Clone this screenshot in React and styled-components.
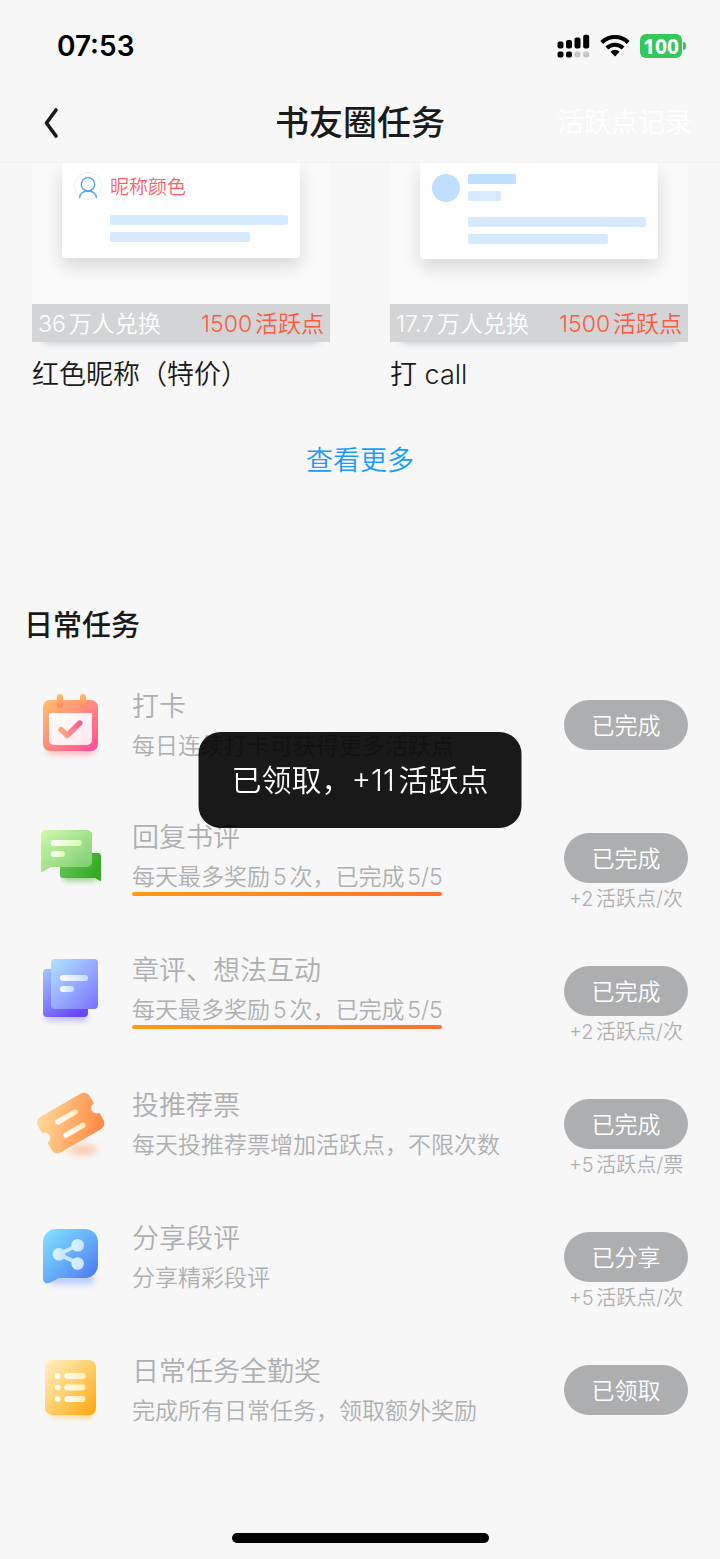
import React from "react";
import styled, { createGlobalStyle } from "styled-components";

const GlobalStyle = createGlobalStyle`
  * {
    box-sizing: border-box;
  }
  body {
    margin: 0;
    background: #f7f7f7;
    color: #1a1a1a;
    font-family: Inter, "Noto Sans CJK SC", sans-serif;
    text-autospace: normal;
  }
  button {
    font-family: inherit;
    border: 0;
    padding: 0;
    background: none;
  }
`;

const rewards = [
  {
    name: "红色昵称（特价）",
    count: "36万人兑换",
    price: "1500活跃点",
    nickname: "昵称颜色",
  },
  {
    name: "打 call",
    count: "17.7万人兑换",
    price: "1500活跃点",
  },
];

const CalendarIcon = () => (
  <svg width="80" height="80" viewBox="0 0 80 80" aria-hidden="true">
    <defs>
      <linearGradient id="calBody" x1="0" y1="0" x2="1" y2="1">
        <stop offset="0" stopColor="#ffc069" />
        <stop offset="0.5" stopColor="#ff8a80" />
        <stop offset="1" stopColor="#ff4a9c" />
      </linearGradient>
      <linearGradient id="calTab" x1="0" y1="0" x2="0" y2="1">
        <stop offset="0" stopColor="#ffbd66" />
        <stop offset="1" stopColor="#ff8868" />
      </linearGradient>
      <linearGradient id="calPaper" x1="0" y1="0" x2="1" y2="1">
        <stop offset="0" stopColor="#ffffff" />
        <stop offset="1" stopColor="#ffe6ec" />
      </linearGradient>
      <linearGradient id="calCheck" gradientUnits="userSpaceOnUse" x1="27" y1="50" x2="50" y2="40">
        <stop offset="0" stopColor="#ffb07a" />
        <stop offset="1" stopColor="#ff4f94" />
      </linearGradient>
      <filter id="calBlur" x="-20%" y="-80%" width="140%" height="260%">
        <feGaussianBlur stdDeviation="3" />
      </filter>
    </defs>
    <rect x="15" y="64" width="47" height="8" rx="4" fill="url(#calBody)" opacity="0.6" filter="url(#calBlur)" />
    <rect x="11" y="18" width="55" height="51" rx="7" fill="url(#calBody)" />
    <path d="M17 31h43v27a5 5 0 0 1-5 5H22a5 5 0 0 1-5-5z" fill="url(#calPaper)" />
    <rect x="25" y="12" width="6" height="14" rx="3" fill="url(#calTab)" />
    <rect x="48" y="12" width="6" height="14" rx="3" fill="url(#calTab)" />
    <path
      d="M29 47.5l6.3 6 12.4-12.5"
      fill="none"
      stroke="url(#calCheck)"
      strokeWidth="5.4"
      strokeLinecap="round"
      strokeLinejoin="round"
    />
  </svg>
);

const ReplyIcon = () => (
  <svg width="80" height="80" viewBox="0 0 80 80" aria-hidden="true">
    <defs>
      <linearGradient id="replyFront" x1="0" y1="0" x2="1" y2="1">
        <stop offset="0" stopColor="#d0f8ae" />
        <stop offset="1" stopColor="#78cb6a" />
      </linearGradient>
      <linearGradient id="replyBack" x1="0" y1="0" x2="1" y2="0.4">
        <stop offset="0" stopColor="#6cc95a" />
        <stop offset="1" stopColor="#35aa25" />
      </linearGradient>
      <linearGradient id="replyLine" x1="0" y1="0" x2="1" y2="0">
        <stop offset="0" stopColor="#ffffff" />
        <stop offset="1" stopColor="#d9f9ae" />
      </linearGradient>
      <filter id="replyBlur" x="-20%" y="-80%" width="140%" height="260%">
        <feGaussianBlur stdDeviation="2.5" />
      </filter>
    </defs>
    <rect x="31" y="60" width="34" height="6" rx="3" fill="#5cc048" opacity="0.65" filter="url(#replyBlur)" />
    <path d="M31 38h35a3 3 0 0 1 3 3v25.500l-6-3.500H31a3 3 0 0 1-3-3V41a3 3 0 0 1 3-3z" fill="url(#replyBack)" />
    <path d="M14 15h41a5 5 0 0 1 5 5v27a5 5 0 0 1-5 5H19l-10 5.500V20a5 5 0 0 1 5-5z" fill="url(#replyFront)" />
    <rect x="19" y="25" width="31" height="6" rx="3" fill="url(#replyLine)" />
    <rect x="19" y="36" width="14" height="6" rx="3" fill="url(#replyLine)" />
  </svg>
);

const ChapterIcon = () => (
  <svg width="80" height="80" viewBox="0 0 80 80" aria-hidden="true">
    <defs>
      <linearGradient id="chapFront" x1="0" y1="0" x2="1" y2="1">
        <stop offset="0" stopColor="#b0e2ff" />
        <stop offset="0.5" stopColor="#97adff" />
        <stop offset="1" stopColor="#7b6ffb" />
      </linearGradient>
      <linearGradient id="chapBack" x1="0" y1="0" x2="0.7" y2="1">
        <stop offset="0" stopColor="#a3c6ff" />
        <stop offset="1" stopColor="#6745fa" />
      </linearGradient>
      <linearGradient id="chapLine" x1="0" y1="0" x2="1" y2="0">
        <stop offset="0" stopColor="#ffffff" />
        <stop offset="1" stopColor="#c3dcff" />
      </linearGradient>
      <filter id="chapBlur" x="-20%" y="-80%" width="140%" height="260%">
        <feGaussianBlur stdDeviation="3" />
      </filter>
    </defs>
    <rect x="13" y="65" width="42" height="7" rx="3" fill="url(#chapBack)" opacity="0.55" filter="url(#chapBlur)" />
    <rect x="11" y="21" width="45" height="48" rx="4" fill="url(#chapBack)" />
    <rect x="19" y="11" width="47" height="50" rx="4" fill="url(#chapFront)" />
    <rect x="28" y="27" width="28" height="6" rx="3" fill="url(#chapLine)" />
    <rect x="28" y="38" width="14" height="6" rx="3" fill="url(#chapLine)" />
  </svg>
);

const TicketIcon = () => (
  <svg width="80" height="80" viewBox="0 0 80 80" aria-hidden="true">
    <defs>
      <linearGradient id="ticketBody" x1="0" y1="0.2" x2="1" y2="0.8">
        <stop offset="0" stopColor="#ffd793" />
        <stop offset="1" stopColor="#ff8a45" />
      </linearGradient>
      <linearGradient id="ticketLine" x1="0" y1="0" x2="1" y2="0">
        <stop offset="0" stopColor="#ffffff" />
        <stop offset="1" stopColor="#ffe9bf" />
      </linearGradient>
      <filter id="ticketBlur" x="-30%" y="-100%" width="160%" height="300%">
        <feGaussianBlur stdDeviation="3.5" />
      </filter>
    </defs>
    <ellipse cx="51" cy="69" rx="14" ry="5" fill="#ff9a5c" opacity="0.5" filter="url(#ticketBlur)" />
    <g transform="translate(38.7 42) rotate(-30)">
      <path
        d="M-23-20.500h46a7 7 0 0 1 7 7v8a5.500 5.500 0 0 0 0 11v8a7 7 0 0 1-7 7h-46a7 7 0 0 1-7-7v-8a5.500 5.500 0 0 0 0-11v-8a7 7 0 0 1 7-7z"
        fill="url(#ticketBody)"
      />
      <rect x="-13" y="-10" width="25" height="5.4" rx="2.7" fill="url(#ticketLine)" />
      <rect x="-13" y="5.5" width="25" height="5.4" rx="2.7" fill="url(#ticketLine)" />
    </g>
  </svg>
);

const ShareIcon = () => (
  <svg width="80" height="80" viewBox="0 0 80 80" aria-hidden="true">
    <defs>
      <linearGradient id="shareBody" x1="0" y1="0" x2="1" y2="1">
        <stop offset="0" stopColor="#83e3ff" />
        <stop offset="0.5" stopColor="#65aef9" />
        <stop offset="1" stopColor="#4a70ee" />
      </linearGradient>
      <linearGradient id="shareMark" x1="0" y1="0" x2="1" y2="0">
        <stop offset="0" stopColor="#d9f4ff" />
        <stop offset="1" stopColor="#c9e3ff" />
      </linearGradient>
      <filter id="shareBlur" x="-20%" y="-80%" width="140%" height="260%">
        <feGaussianBlur stdDeviation="3" />
      </filter>
    </defs>
    <rect x="18" y="61" width="44" height="9" rx="4" fill="#7ea6ff" opacity="0.55" filter="url(#shareBlur)" />
    <path
      d="M24 15h29a13 13 0 0 1 13 13v23a13 13 0 0 1-13 13H27l-8 4.200C14 71 11 68 11 65V28a13 13 0 0 1 13-13z"
      fill="url(#shareBody)"
    />
    <path d="M45.700 31.300L27 40.300l18.700 9" fill="none" stroke="#c9e6ff" strokeWidth="3.8" />
    <circle cx="27" cy="40.3" r="6.3" fill="url(#shareMark)" />
    <circle cx="45.7" cy="31.3" r="6.3" fill="url(#shareMark)" />
    <circle cx="45.7" cy="49.5" r="6.3" fill="url(#shareMark)" />
  </svg>
);

const ListIcon = () => (
  <svg width="80" height="80" viewBox="0 0 80 80" aria-hidden="true">
    <defs>
      <linearGradient id="listBody" x1="0" y1="0" x2="1" y2="1">
        <stop offset="0" stopColor="#fff0c4" />
        <stop offset="0.5" stopColor="#ffcf6b" />
        <stop offset="1" stopColor="#ffa50a" />
      </linearGradient>
      <linearGradient id="listLine" x1="0" y1="0" x2="1" y2="0">
        <stop offset="0" stopColor="#ffffff" />
        <stop offset="1" stopColor="#ffedb5" />
      </linearGradient>
      <filter id="listBlur" x="-20%" y="-80%" width="140%" height="260%">
        <feGaussianBlur stdDeviation="2.5" />
      </filter>
    </defs>
    <rect x="18" y="64" width="43" height="7" rx="3" fill="url(#listBody)" opacity="0.6" filter="url(#listBlur)" />
    <rect x="13" y="13" width="51" height="55" rx="7" fill="url(#listBody)" />
    {[29, 40.5, 52].map((y) => (
      <g key={y}>
        <circle cx="25.7" cy={y} r="2.8" fill="#fff" />
        <rect x="32.5" y={y - 3} width="21" height="6" rx="3" fill="url(#listLine)" />
      </g>
    ))}
  </svg>
);

const tasks = [
  {
    Icon: CalendarIcon,
    title: "打卡",
    description: "每日连续打卡可获得更多活跃点",
    status: "已完成",
  },
  {
    Icon: ReplyIcon,
    title: "回复书评",
    description: "每天最多奖励5次，已完成5/5",
    status: "已完成",
    tip: "+2活跃点/次",
    marked: true,
  },
  {
    Icon: ChapterIcon,
    title: "章评、想法互动",
    description: "每天最多奖励5次，已完成5/5",
    status: "已完成",
    tip: "+2活跃点/次",
    marked: true,
  },
  {
    Icon: TicketIcon,
    title: "投推荐票",
    description: "每天投推荐票增加活跃点，不限次数",
    status: "已完成",
    tip: "+5活跃点/票",
  },
  {
    Icon: ShareIcon,
    title: "分享段评",
    description: "分享精彩段评",
    status: "已分享",
    tip: "+5活跃点/次",
  },
  {
    Icon: ListIcon,
    title: "日常任务全勤奖",
    description: "完成所有日常任务，领取额外奖励",
    status: "已领取",
  },
];

const App = () => {
  return (
    <>
      <GlobalStyle />
      <StatusBar>
        <Time>07:53</Time>
        <StatusIcons>
          <svg width="33" height="24" viewBox="0 0 33 24" aria-hidden="true">
            <rect x="0.5" y="7.5" width="6" height="7" rx="2" />
            <rect x="9" y="6" width="6" height="8.5" rx="2" />
            <rect x="17.5" y="3.5" width="6" height="11" rx="2" />
            <rect x="26.2" y="0.8" width="6" height="13.7" rx="2" />
            <rect x="0.5" y="17.5" width="6" height="6" rx="2" />
            <rect x="9" y="17.5" width="6" height="6" rx="2" />
            <rect x="17.5" y="17.5" width="6" height="6" rx="2" fill="#c6c6c6" />
            <rect x="26.2" y="17.5" width="6" height="6" rx="2" fill="#c6c6c6" />
          </svg>
          <svg width="30" height="24" viewBox="0 0 30 24" aria-hidden="true">
            <path d="M1.800 8.500a18.800 18.800 0 0 1 26.400 0" fill="none" stroke="#000" strokeWidth="4" />
            <path d="M6.900 14a11.500 11.500 0 0 1 16.200 0" fill="none" stroke="#000" strokeWidth="4" />
            <path d="M15 22.500l-4.600-4.800a6.500 6.500 0 0 1 9.200 0z" />
          </svg>
          <Battery>100</Battery>
        </StatusIcons>
      </StatusBar>
      <NavBar>
        <BackButton aria-label="返回">
          <svg width="16" height="32" viewBox="0 0 16 32" aria-hidden="true">
            <path
              d="M13 3L3.500 16l9.500 13"
              fill="none"
              stroke="#1a1a1a"
              strokeWidth="3.6"
              strokeLinecap="round"
              strokeLinejoin="round"
            />
          </svg>
        </BackButton>
        <NavTitle>书友圈任务</NavTitle>
        <RecordLink href="#record">活跃点记录</RecordLink>
      </NavBar>

      <main>
        <RewardGrid>
          {rewards.map((item) => (
            <article key={item.name}>
              <Preview>
                <PreviewCard $named={!!item.nickname}>
                  {item.nickname ? (
                    <svg width="28" height="28" viewBox="0 0 28 28" aria-hidden="true">
                      <circle cx="14" cy="14" r="13.5" fill="#fff" stroke="#ececec" />
                      <circle cx="14" cy="12.3" r="6.7" fill="none" stroke="#4ba3fa" strokeWidth="1.4" />
                      <path
                        d="M5.500 26c.6-4.600 4-7 8.500-7s7.900 2.400 8.500 7"
                        fill="none"
                        stroke="#4ba3fa"
                        strokeWidth="1.4"
                      />
                    </svg>
                  ) : (
                    <Avatar />
                  )}
                  <div>
                    {item.nickname ? (
                      <Nickname>{item.nickname}</Nickname>
                    ) : (
                      <Lines>
                        <Line $width="48px" $dark />
                        <Line $width="33px" />
                      </Lines>
                    )}
                    <Lines>
                      <Line $width="178px" />
                      <Line $width="140px" />
                    </Lines>
                  </div>
                </PreviewCard>
              </Preview>
              <Banner>
                <span>{item.count}</span>
                <Price>{item.price}</Price>
              </Banner>
              <RewardName>{item.name}</RewardName>
            </article>
          ))}
        </RewardGrid>
        <MoreLink href="#more">查看更多</MoreLink>

        <SectionTitle>日常任务</SectionTitle>
        <TaskList>
          {tasks.map(({ Icon, title, description, status, tip, marked }) => (
            <TaskRow key={title}>
              <Icon />
              <TaskText>
                <TaskTitle>{title}</TaskTitle>
                <TaskDescription>{description}</TaskDescription>
                {marked && <Underline />}
              </TaskText>
              <TaskAction>
                <StatusButton disabled>{status}</StatusButton>
                {tip && <Tip>{tip}</Tip>}
              </TaskAction>
            </TaskRow>
          ))}
        </TaskList>
      </main>

      <HomeBar />
      <Toast role="status">已领取，+11活跃点</Toast>
    </>
  );
};

export default App;

const StatusBar = styled.div`
  display: flex;
  align-items: center;
  justify-content: space-between;
  height: 92px;
  padding: 0 34px 0 57px;
`;

const Time = styled.span`
  font-size: 28px;
  font-weight: 600;
  color: #000;
`;

const StatusIcons = styled.div`
  display: flex;
  align-items: center;
  gap: 10px;
`;

const Battery = styled.span`
  position: relative;
  width: 42px;
  height: 24px;
  margin-right: 4px;
  border-radius: 6px;
  background: #34c759;
  color: #fff;
  font-family: "Noto Sans", sans-serif;
  font-size: 21px;
  font-weight: 700;
  line-height: 24px;
  text-align: center;

  &::after {
    content: "";
    position: absolute;
    top: 8px;
    right: -4px;
    width: 3px;
    height: 8px;
    border-radius: 0 4px 4px 0;
    background: #34c759;
  }
`;

const NavBar = styled.header`
  display: grid;
  grid-template-columns: 1fr auto 1fr;
  align-items: center;
  height: 71px;
  padding: 0 28px 8px 43px;
  border-bottom: 1px solid #f1f1f1;
`;

const BackButton = styled.button`
  display: flex;
  width: 40px;
  cursor: pointer;
`;

const NavTitle = styled.h1`
  margin: 0;
  padding-right: 15px;
  font-size: 34px;
  font-weight: 500;
  line-height: 48px;
`;

const RecordLink = styled.a`
  justify-self: end;
  color: #fff;
  font-size: 27px;
  font-weight: 350;
  line-height: 40px;
  text-decoration: none;
`;

const RewardGrid = styled.section`
  display: grid;
  grid-template-columns: repeat(2, minmax(0, 1fr));
  gap: 60px;
  padding: 0 32px;
`;

const Preview = styled.div`
  height: 141px;
  padding: 0 30px;
  overflow: hidden;
  background: #fafafa;
`;

const PreviewCard = styled.div`
  display: flex;
  gap: 8px;
  height: ${(props) => (props.$named ? "95px" : "96px")};
  padding: ${(props) => (props.$named ? "9px" : "11px")} 12px 0;
  border-radius: 0 0 4px 4px;
  background: #fff;
  box-shadow: 0 8px 18px rgba(0, 0, 0, 0.14);
`;

const Avatar = styled.div`
  width: 28px;
  height: 28px;
  border-radius: 50%;
  background: #c0dfff;
`;

const Nickname = styled.div`
  height: 43px;
  color: #ff5f66;
  font-size: 19px;
  font-weight: 350;
  line-height: 32px;
`;

const Lines = styled.div`
  display: flex;
  flex-direction: column;
  gap: 7px;

  & + & {
    margin-top: 16px;
  }
`;

const Line = styled.div`
  width: ${(props) => props.$width};
  height: 10px;
  border-radius: 2px;
  background: ${(props) => (props.$dark ? "#c0dfff" : "#d6eaff")};
`;

const Banner = styled.div`
  display: flex;
  justify-content: space-between;
  height: 38px;
  padding: 0 6px;
  background: #d2d4d6;
  box-shadow: 0 12px 8px -12px rgba(60, 90, 120, 0.35);
  color: #fff;
  font-size: 23px;
  font-weight: 350;
  line-height: 40px;
  white-space: nowrap;
`;

const Price = styled.span`
  color: #ff5a40;
`;

const RewardName = styled.h3`
  margin: 0;
  font-size: 27px;
  font-weight: 350;
  line-height: 66px;
`;

const MoreLink = styled.a`
  display: block;
  width: fit-content;
  margin: 22px auto 0;
  color: #1a9cf8;
  font-size: 27px;
  font-weight: 350;
  line-height: 62px;
  text-decoration: none;
`;

const SectionTitle = styled.h2`
  margin: 112px 24px 34px;
  font-size: 29px;
  font-weight: 500;
  line-height: 44px;
`;

const TaskList = styled.ul`
  margin: 0;
  padding: 0 32px;
  list-style: none;
`;

const TaskRow = styled.li`
  display: flex;
  height: 133px;
`;

const TaskText = styled.div`
  display: flex;
  flex: 1;
  flex-direction: column;
  justify-content: center;
  height: 80px;
  margin-left: 20px;
  color: #adafb1;
  font-weight: 350;
  white-space: nowrap;
`;

const TaskTitle = styled.h3`
  margin: 0;
  font-size: 27px;
  font-weight: inherit;
  line-height: 48px;
`;

const TaskDescription = styled.p`
  margin: 0;
  font-size: 23px;
  line-height: 30px;
`;

const Underline = styled.div`
  flex: none;
  width: 310px;
  height: 4px;
  border-radius: 2px;
  background: linear-gradient(90deg, #ff9a14, #ff7230);
`;

const TaskAction = styled.div`
  display: flex;
  flex-direction: column;
  align-items: center;
  width: 124px;
  padding-top: 18px;
`;

const StatusButton = styled.button`
  width: 100%;
  height: 50px;
  flex: none;
  padding-bottom: 2px;
  border-radius: 25px;
  background: #acaeb0;
  color: #fff;
  font-size: 23px;
  font-weight: 350;
`;

const Tip = styled.span`
  color: #adafb1;
  font-size: 20px;
  font-weight: 350;
  line-height: 32px;
  white-space: nowrap;
`;

const HomeBar = styled.div`
  width: 257px;
  height: 10px;
  margin: 53px auto 16px;
  border-radius: 5px;
  background: #000;
`;

const Toast = styled.div`
  position: fixed;
  top: 50%;
  left: 50%;
  transform: translate(-50%, -50%);
  padding: 24px 33px;
  border-radius: 22px;
  background: rgba(0, 0, 0, 0.9);
  color: #fff;
  font-size: 30px;
  font-weight: 350;
  line-height: 48px;
  white-space: nowrap;
`;
